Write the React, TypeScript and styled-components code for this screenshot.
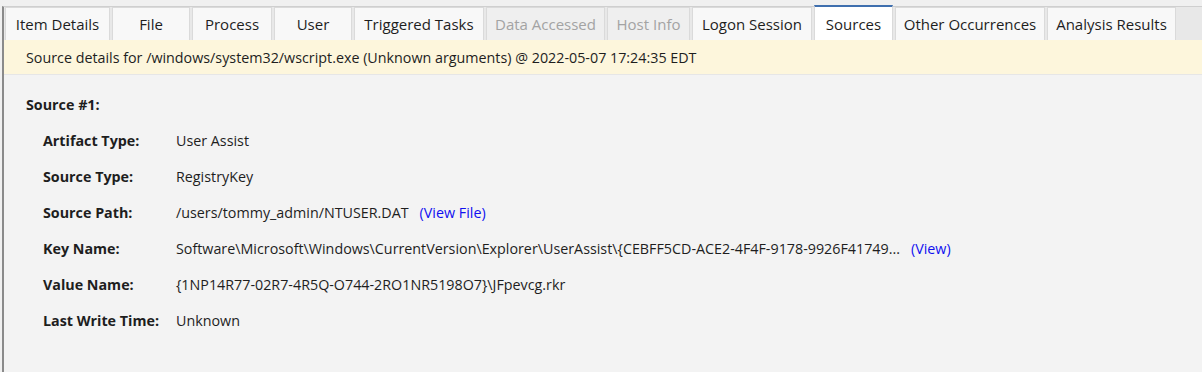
import styled, { createGlobalStyle } from "styled-components";

const GlobalStyle = createGlobalStyle`
  html, body {
    margin: 0;
    padding: 0;
    background: #f3f3f3;
  }
  body {
    font-family: "Open Sans", "Noto Sans", "Liberation Sans", sans-serif;
  }
`;

const tabs = [
  { label: "Item Details", width: 105 },
  { label: "File", width: 78 },
  { label: "Process", width: 80 },
  { label: "User", width: 78 },
  { label: "Triggered Tasks", width: 130 },
  { label: "Data Accessed", width: 119, disabled: true },
  { label: "Host Info", width: 83, disabled: true },
  { label: "Logon Session", width: 120 },
  { label: "Sources", width: 79, active: true },
  { label: "Other Occurrences", width: 150 },
  { label: "Analysis Results", width: 129 },
];

const rows = [
  { label: "Artifact Type:", value: "User Assist" },
  { label: "Source Type:", value: "RegistryKey" },
  {
    label: "Source Path:",
    value: "/users/tommy_admin/NTUSER.DAT",
    link: "(View File)",
  },
  {
    label: "Key Name:",
    value:
      "Software\\Microsoft\\Windows\\CurrentVersion\\Explorer\\UserAssist\\{CEBFF5CD-ACE2-4F4F-9178-9926F41749...",
    link: "(View)",
  },
  {
    label: "Value Name:",
    value: "{1NP14R77-02R7-4R5Q-O744-2RO1NR5198O7}\\JFpevcg.rkr",
  },
  { label: "Last Write Time:", value: "Unknown" },
];

const Frame = styled.div`
  height: 372px;
  display: flex;
  flex-direction: column;
  background: #f0f0f0;
  border-left: 2px solid #f0f0f0;
  box-sizing: border-box;
  overflow: hidden;
`;

const Panel = styled.div`
  flex: 1;
  display: flex;
  flex-direction: column;
  margin-top: 6px;
  border-top: 1px solid #cfcfcf;
  border-left: 2px solid #8a8a8a;
  box-shadow: inset 1px 0 0 #dcdcdc;
`;

const TabBar = styled.div`
  display: flex;
  gap: 2px;
  height: 33px;
  padding-left: 1px;
  background: #e8e8e8;
  align-items: stretch;
`;

const Tab = styled.div<{ $width: number; $active?: boolean; $disabled?: boolean }>`
  width: ${(p) => p.$width}px;
  box-sizing: border-box;
  display: flex;
  align-items: center;
  justify-content: center;
  font-size: 15px;
  white-space: nowrap;
  color: ${(p) => (p.$disabled ? "#a3a3a3" : "#1e1e1e")};
  background: ${(p) =>
    p.$active ? "#ffffff" : p.$disabled ? "#efefef" : "#f8f8f8"};
  border: 1px solid #dadada;
  border-bottom: none;
  ${(p) =>
    p.$active &&
    `
    border-top: 2px solid #3f6fae;
    margin-top: -2px;
    margin-bottom: -1px;
  `}
`;

const InfoBar = styled.div`
  height: 34px;
  display: flex;
  align-items: center;
  padding-left: 22px;
  background: #fdf6dc;
  border-bottom: 1px solid #e6e6e6;
  font-size: 14.3px;
  color: #1e1e1e;
  white-space: nowrap;
`;

const Content = styled.div`
  flex: 1;
  background: #f3f3f3;
  padding: 20px 0 0 22px;
  color: #1e1e1e;
  font-size: 14.3px;
`;

const Heading = styled.div`
  font-weight: 700;
  height: 20px;
  line-height: 20px;
  margin-bottom: 7px;
`;

const Grid = styled.div`
  display: grid;
  grid-template-columns: 133px auto;
  grid-auto-rows: 36px;
  padding-left: 17px;
  align-items: center;
`;

const Label = styled.div`
  font-weight: 700;
  white-space: nowrap;
`;

const Value = styled.div`
  white-space: nowrap;
  display: flex;
  gap: 11px;
`;

const Link = styled.span`
  color: #1010f0;
  cursor: pointer;
`;

export default function App() {
  return (
    <>
      <GlobalStyle />
      <Frame>
        <Panel>
          <TabBar>
            {tabs.map((t) => (
              <Tab
                key={t.label}
                $width={t.width}
                $active={t.active}
                $disabled={t.disabled}
              >
                {t.label}
              </Tab>
            ))}
          </TabBar>
          <InfoBar>
            Source details for /windows/system32/wscript.exe (Unknown arguments) @ 2022-05-07 17:24:35 EDT
          </InfoBar>
          <Content>
            <Heading>Source #1:</Heading>
            <Grid>
              {rows.map((r) => (
                <>
                  <Label key={r.label + "l"}>{r.label}</Label>
                  <Value key={r.label + "v"}>
                    <span>{r.value}</span>
                    {r.link && <Link>{r.link}</Link>}
                  </Value>
                </>
              ))}
            </Grid>
          </Content>
        </Panel>
      </Frame>
    </>
  );
}
